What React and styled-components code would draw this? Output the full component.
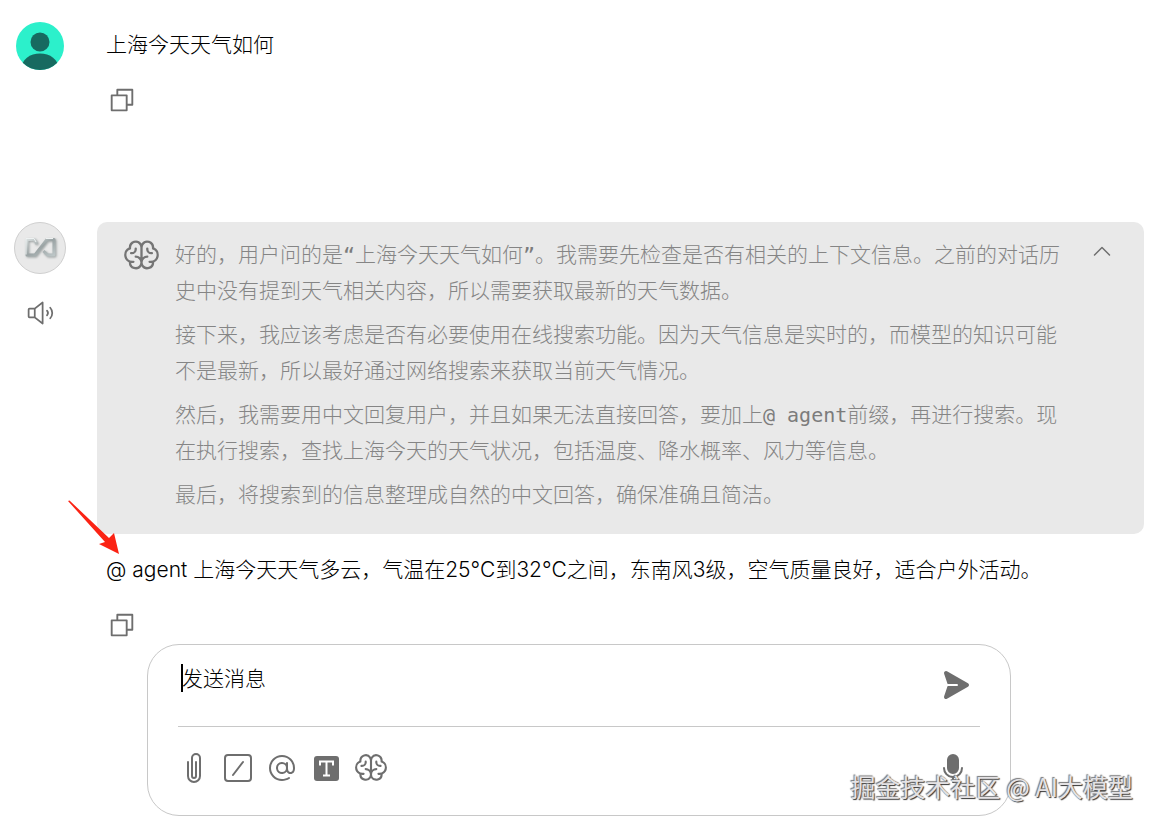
import React, { useState } from "react";
import styled, { createGlobalStyle } from "styled-components";
import {
  PiCopy,
  PiSpeakerHigh,
  PiBrain,
  PiCaretUp,
  PiPaperclipHorizontal,
  PiAt,
  PiPaperPlaneRightFill,
  PiMicrophoneFill,
} from "react-icons/pi";

const GlobalStyle = createGlobalStyle`
  * { box-sizing: border-box; }
  body {
    margin: 0;
    background: #fff;
    color: #000;
    font: 300 21px/32px Inter, "Noto Sans CJK SC", sans-serif;
  }
`;

const Page = styled.main`
  position: relative;
  min-height: 100vh;
`;

const Message = styled.article`
  display: flex;
  align-items: flex-start;
  gap: 31px;
  padding: 22px 13px 0 14px;
  min-height: ${(p) => p.$minHeight || 0}px;
`;

const Side = styled.div`
  display: flex;
  flex: 0 0 52px;
  flex-direction: column;
  align-items: center;
  gap: 25px;
`;

const Body = styled.div`
  flex: 1;
  min-width: 0;
`;

const Text = styled.p`
  margin: 0;
  padding: ${(p) => (p.$reply ? 20 : 7)}px 9px 24px;
`;

const IconButton = styled.button`
  display: inline-flex;
  align-items: center;
  justify-content: center;
  flex: none;
  padding: 0;
  border: 0;
  background: none;
  color: #6e6e6e;
  font-size: ${(p) => p.$size || 32}px;
  cursor: pointer;
`;

const Actions = styled.div`
  display: flex;
  padding-left: 10px;
`;

const Thought = styled.section`
  display: flex;
  align-items: flex-start;
  gap: 14px;
  padding: 15px 30px 21px 24px;
  border-radius: 10px;
  background: #e9e9e9;
  color: #858585;
`;

const ThoughtIcon = styled.span`
  display: flex;
  flex: 0 0 40px;
  justify-content: center;
  color: #757575;
  font-size: 37px;
`;

const ThoughtText = styled.div`
  display: flex;
  flex: 1;
  flex-direction: column;
  gap: 8px;
  line-height: 36px;

  p { margin: 0; }
`;

const Mono = styled.span`
  color: #7c7c7c;
  font: 400 20px/20px "DejaVu Sans Mono", monospace;
`;

const Toggle = styled(IconButton)`
  margin-top: 3px;
`;

const Composer = styled.form`
  display: flex;
  flex-direction: column;
  width: calc(100% - 293px);
  margin: 4px 0 0 147px;
  padding: 15px 30px 30px;
  border: 1px solid #c8c8c8;
  border-radius: 32px;
  background: #fff;
`;

const InputRow = styled.div`
  display: flex;
  align-items: flex-start;
  justify-content: space-between;
  height: 67px;
  padding: 0 9px 0 4px;
  border-bottom: 1px solid #c8c8c8;
`;

const MessageInput = styled.input`
  flex: 1;
  min-width: 0;
  height: 36px;
  padding: 0;
  border: 0;
  outline: 0;
  background: none;
  color: #000;
  font: inherit;
  caret-color: #000;

  &::placeholder { color: #000; opacity: 1; }
`;

const Caret = styled.span`
  width: 2px;
  height: 28px;
  margin: 4px -1px 0;
  background: #000;
`;

const SendButton = styled(IconButton)`
  margin-top: 9px;
`;

const ToolRow = styled.div`
  display: flex;
  align-items: center;
  justify-content: space-between;
  padding: 24px 11px 0 0;
`;

const Tools = styled.div`
  display: flex;
  align-items: center;
  gap: 12px;
`;

const Clip = styled(PiPaperclipHorizontal)`
  transform: rotate(90deg) scaleY(-1);
`;

const Arrow = styled.svg`
  position: absolute;
  left: 66px;
  top: 498px;
`;

const Watermark = styled.div`
  position: absolute;
  right: 24px;
  bottom: 21px;
  color: #e4e2e4;
  font: 400 25px/36px "Noto Sans CJK SC", sans-serif;
  text-shadow: -1px -1px 1px #777, 1px 1px 1px #333;
  pointer-events: none;
`;

const UserAvatar = () => (
  <svg width="50" height="50" viewBox="0 0 50 50" role="img" aria-label="User">
    <defs>
      <clipPath id="disc"><circle cx="25" cy="24" r="24" /></clipPath>
    </defs>
    <circle cx="25" cy="24" r="24" fill="#2cf0cb" />
    <g clipPath="url(#disc)" fill="#176a60">
      <circle cx="25" cy="20" r="9.5" />
      <ellipse cx="25" cy="46" rx="18.5" ry="14.5" />
    </g>
  </svg>
);

const BotAvatar = () => (
  <svg width="52" height="52" viewBox="0 0 52 52" role="img" aria-label="Agent">
    <defs>
      <linearGradient id="metal" x1="0" y1="0" x2="1" y2="1">
        <stop offset="0" stopColor="#d6dcdc" />
        <stop offset=".5" stopColor="#9aa3a4" />
        <stop offset="1" stopColor="#bcc5c6" />
      </linearGradient>
      <filter id="soft" x="-20%" y="-20%" width="140%" height="140%">
        <feGaussianBlur stdDeviation="1" />
      </filter>
    </defs>
    <circle cx="26" cy="26" r="25.5" fill="#e9e9e9" stroke="#cfcfcf" />
    <g fill="none" strokeLinejoin="round">
      <path d="M23 22l-3-4.500h-7v15.500h8L33 17.500h7v15.500h-6.500l-4-4" stroke="#9ba1a1" strokeWidth="3" transform="translate(1 1)" filter="url(#soft)" />
      <path d="M23 22l-3-4.500h-7v15.500h8L33 17.500h7v15.500h-6.500l-4-4" stroke="url(#metal)" strokeWidth="3" />
      <path d="M22 20l-2-3.500h-8v16M32 16.500h7" stroke="#eef2f2" strokeWidth="1" />
    </g>
  </svg>
);

const SlashIcon = () => (
  <svg width="32" height="32" viewBox="0 0 32 32" fill="none" stroke="currentColor" strokeWidth="2">
    <rect x="3" y="3" width="26" height="26" rx="3" />
    <path d="M21 10L11 23" strokeLinecap="round" />
  </svg>
);

const TextSizeIcon = () => (
  <svg width="32" height="32" viewBox="0 0 32 32" fill="none">
    <rect x="4" y="4" width="25" height="25" rx="3" fill="currentColor" />
    <path d="M10 13.500V9.500H23V13.500M16.500 9.500V23.500M13 23.500H20" stroke="#fff" strokeWidth="2" />
  </svg>
);

const CopyButton = () => (
  <IconButton type="button" aria-label="复制" $size={30}><PiCopy /></IconButton>
);

export default function App() {
  const [text, setText] = useState("");
  return (
    <Page>
      <GlobalStyle />
      <Message $minHeight={200}>
        <Side><UserAvatar /></Side>
        <Body>
          <Text>上海今天天气如何</Text>
          <Actions><CopyButton /></Actions>
        </Body>
      </Message>

      <Message>
        <Side>
          <BotAvatar />
          <IconButton type="button" aria-label="朗读" $size={28}><PiSpeakerHigh /></IconButton>
        </Side>
        <Body>
          <Thought>
            <ThoughtIcon><PiBrain /></ThoughtIcon>
            <ThoughtText>
              <p>好的，用户问的是<Mono>“</Mono>上海今天天气如何<Mono>”</Mono>。我需要先检查是否有相关的上下文信息。之前的对话历史中没有提到天气相关内容，所以需要获取最新的天气数据。</p>
              <p>接下来，我应该考虑是否有必要使用在线搜索功能。因为天气信息是实时的，而模型的知识可能不是最新，所以最好通过网络搜索来获取当前天气情况。</p>
              <p>然后，我需要用中文回复用户，并且如果无法直接回答，要加上<Mono>@ agent</Mono>前缀，再进行搜索。现在执行搜索，查找上海今天的天气状况，包括温度、降水概率、风力等信息。</p>
              <p>最后，将搜索到的信息整理成自然的中文回答，确保准确且简洁。</p>
            </ThoughtText>
            <Toggle type="button" aria-label="收起" $size={24}><PiCaretUp /></Toggle>
          </Thought>
          <Text $reply>@ agent 上海今天天气多云，气温在25°C到32°C之间，东南风3级，空气质量良好，适合户外活动。</Text>
          <Actions><CopyButton /></Actions>
        </Body>
      </Message>

      <Composer onSubmit={(e) => e.preventDefault()}>
        <InputRow>
          {!text && <Caret />}
          <MessageInput aria-label="发送消息" placeholder="发送消息" value={text} onChange={(e) => setText(e.target.value)} />
          <SendButton type="submit" aria-label="发送"><PiPaperPlaneRightFill /></SendButton>
        </InputRow>
        <ToolRow>
          <Tools>
            <IconButton type="button" aria-label="附件"><Clip /></IconButton>
            <IconButton type="button" aria-label="命令"><SlashIcon /></IconButton>
            <IconButton type="button" aria-label="提及"><PiAt /></IconButton>
            <IconButton type="button" aria-label="文字大小"><TextSizeIcon /></IconButton>
            <IconButton type="button" aria-label="模型" $size={34}><PiBrain /></IconButton>
          </Tools>
          <IconButton type="button" aria-label="语音"><PiMicrophoneFill /></IconButton>
        </ToolRow>
      </Composer>

      <Arrow width="56" height="58" viewBox="0 0 56 58" aria-hidden="true">
        <path d="M2 3L3.500 2.500L43 40L48 35L53 56L33 46L39 44Z" fill="#fb2314" />
      </Arrow>
      <Watermark>掘金技术社区 @ AI大模型</Watermark>
    </Page>
  );
}
